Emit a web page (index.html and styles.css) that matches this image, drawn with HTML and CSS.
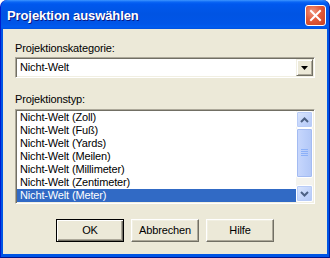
FILE: index.html
```html
<!DOCTYPE html>
<html>
<head>
<meta charset="utf-8">
<link rel="stylesheet" href="styles.css">
</head>
<body>
<div class="window">
  <div class="titlebar">
    <span class="title">Projektion auswählen</span>
    <span class="close">
      <svg width="21" height="21" viewBox="0 0 21 21">
        <path d="M6 6 L15 15 M15 6 L6 15" stroke="#fff" stroke-width="2" stroke-linecap="square"/>
      </svg>
    </span>
  </div>
  <div class="client">
    <div class="label">Projektionskategorie:</div>
    <div class="combo">
      <span class="combo-text">Nicht-Welt</span>
      <span class="combo-btn">
        <svg width="7" height="4" viewBox="0 0 7 4"><path d="M0 0h7L3.5 4z" fill="#000"/></svg>
      </span>
    </div>
    <div class="label label2">Projektionstyp:</div>
    <div class="listbox">
      <ul class="items">
        <li>Nicht-Welt (Zoll)</li>
        <li>Nicht-Welt (Fuß)</li>
        <li>Nicht-Welt (Yards)</li>
        <li>Nicht-Welt (Meilen)</li>
        <li>Nicht-Welt (Millimeter)</li>
        <li>Nicht-Welt (Zentimeter)</li>
        <li class="selected">Nicht-Welt (Meter)</li>
      </ul>
      <div class="scrollbar">
        <div class="sb-btn">
          <svg width="9" height="6" viewBox="0 0 9 6"><path d="M1 5 L4.5 1.5 L8 5" fill="none" stroke="#4D6185" stroke-width="2"/></svg>
        </div>
        <div class="sb-thumb">
          <svg width="7" height="8" viewBox="0 0 7 8"><path d="M0 0.5h7M0 2.5h7M0 4.5h7M0 6.5h7" stroke="#8CB0F8" stroke-width="1"/></svg>
        </div>
        <div class="sb-track"></div>
        <div class="sb-btn">
          <svg width="9" height="6" viewBox="0 0 9 6"><path d="M1 1 L4.5 4.5 L8 1" fill="none" stroke="#4D6185" stroke-width="2"/></svg>
        </div>
      </div>
    </div>
    <div class="buttons">
      <div class="btn default">OK</div>
      <div class="btn">Abbrechen</div>
      <div class="btn">Hilfe</div>
    </div>
  </div>
</div>
</body>
</html>
```

FILE: styles.css
```css
html, body {
  margin: 0;
  padding: 0;
  background: #fff;
}
.window {
  width: 330px;
  height: 258px;
  box-sizing: border-box;
  border-radius: 7px 7px 0 0;
  background: #0055E5;
  border-left: 1px solid #0019CF;
  border-right: 1px solid #001EA0;
  border-bottom: 1px solid #00138C;
  display: flex;
  flex-direction: column;
  overflow: hidden;
  font-family: "Liberation Sans", Arial, sans-serif;
}
.titlebar {
  height: 29px;
  flex: none;
  display: flex;
  align-items: center;
  justify-content: space-between;
  padding: 0 3px 0 6px;
  background: linear-gradient(#3D95FF 0px, #0A66F5 2px, #0058EE 4px, #0054E3 14px, #0055E8 24px, #005CF0 27px, #0050E0 29px);
  border-radius: 7px 7px 0 0;
}
.title {
  color: #fff;
  font-weight: bold;
  font-size: 13px;
  letter-spacing: -0.1px;
  text-shadow: 1px 1px 0 #0A1883;
  margin-top: 1px;
}
.close {
  width: 21px;
  height: 21px;
  box-sizing: border-box;
  border: 1px solid #fff;
  border-radius: 3px;
  background: radial-gradient(circle at 35% 30%, #F09880 0%, #E25A3A 45%, #C8401F 100%);
  display: flex;
  margin-top: 1px;
}
.close svg {
  margin: -1px;
}
.client {
  flex: 1;
  margin: 0 2px 3px 2px;
  background: #ECE9D8;
  padding: 13px 12px 0 12px;
  display: flex;
  flex-direction: column;
  font-size: 11px;
  letter-spacing: -0.15px;
  color: #000;
}
.label {
  height: 13px;
  line-height: 13px;
}
.label2 {
  margin-top: 15px;
}
.combo {
  margin-top: 2px;
  height: 21px;
  box-sizing: border-box;
  border: 1px solid;
  border-color: #ACA899 #fff #fff #ACA899;
  box-shadow: inset 1px 1px 0 #716F64, inset -1px -1px 0 #F1EFE2;
  background: #fff;
  display: flex;
  align-items: center;
  padding: 1px;
}
.combo-text {
  flex: 1;
  padding-left: 3px;
  line-height: 17px;
}
.combo-btn {
  width: 17px;
  height: 17px;
  box-sizing: border-box;
  background: #ECE9D8;
  border: 1px solid;
  border-color: #F1EFE2 #716F64 #716F64 #F1EFE2;
  box-shadow: inset 1px 1px 0 #fff, inset -1px -1px 0 #ACA899;
  display: flex;
  align-items: center;
  justify-content: center;
}
.listbox {
  margin-top: 3px;
  height: 95px;
  box-sizing: border-box;
  border: 1px solid;
  border-color: #ACA899 #fff #fff #ACA899;
  box-shadow: inset 1px 1px 0 #716F64, inset -1px -1px 0 #F1EFE2;
  background: #fff;
  padding: 1px;
  display: flex;
}
.items {
  flex: 1;
  list-style: none;
  margin: 0;
  padding: 0;
}
.items li {
  height: 13px;
  line-height: 13px;
  padding-left: 3px;
  white-space: nowrap;
}
.items li.selected {
  background: #316AC5;
  color: #fff;
}
.scrollbar {
  width: 17px;
  display: flex;
  flex-direction: column;
  background: #F4F3EE;
}
.sb-btn {
  height: 17px;
  box-sizing: border-box;
  border: 1px solid #fff;
  border-radius: 2px;
  background: linear-gradient(135deg, #DCE7FD 0%, #C1D3FB 60%, #B4C8F6 100%);
  box-shadow: inset 0 0 0 1px #B9CCF7;
  display: flex;
  align-items: center;
  justify-content: center;
}
.sb-thumb {
  height: 50px;
  box-sizing: border-box;
  border: 1px solid #fff;
  border-radius: 2px;
  background: linear-gradient(90deg, #C9D8FC 0%, #BCCFFA 50%, #B2C7F6 100%);
  box-shadow: inset 0 0 0 1px #A3BBF2;
  display: flex;
  align-items: center;
  justify-content: center;
}
.sb-track {
  flex: 1;
}
.buttons {
  margin-top: 15px;
  display: flex;
  justify-content: center;
  gap: 7px;
}
.btn {
  width: 68px;
  height: 23px;
  box-sizing: border-box;
  border: 1px solid;
  border-color: #fff #716F64 #716F64 #fff;
  box-shadow: inset -1px -1px 0 #ACA899, inset 1px 1px 0 #F1EFE2;
  background: #ECE9D8;
  display: flex;
  align-items: center;
  justify-content: center;
  line-height: 13px;
}
.btn.default {
  border: 1px solid #000;
  box-shadow: inset 1px 1px 0 #fff, inset -1px -1px 0 #716F64, inset -2px -2px 0 #ACA899;
}
```
